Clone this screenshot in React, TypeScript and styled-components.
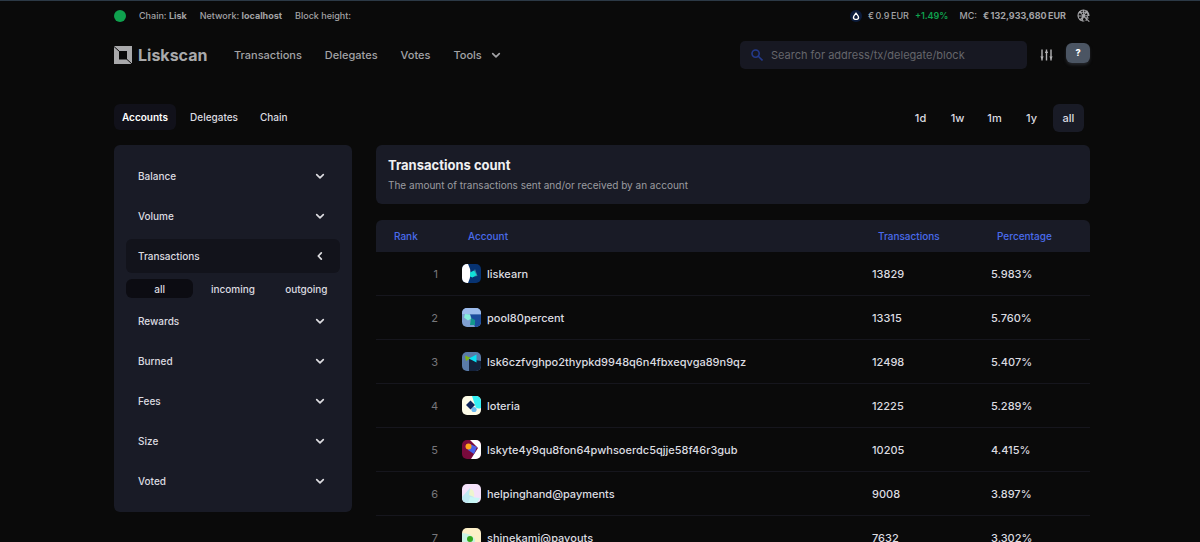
import React from "react";
import styled, { createGlobalStyle } from "styled-components";

const colors = {
  page: "#0a0a0a",
  panel: "#191b26",
  panelDark: "#12131b",
  pill: "#0c0c12",
  line: "#16161d",
  text: "#dcdce0",
  muted: "#a3a3a6",
  blue: "#4a6cec",
  green: "#0fa14e",
};

const GlobalStyle = createGlobalStyle`
  *, *::before, *::after { box-sizing: border-box; }
  html { scrollbar-width: none; }
  body {
    margin: 0;
    background: ${colors.page};
    color: ${colors.text};
    font-family: Inter, "Open Sans", sans-serif;
    font-size: 11px;
    line-height: 16px;
  }
  button, input { font: inherit; color: inherit; }
  button { border: 0; padding: 0; background: none; cursor: pointer; }
  a { color: inherit; text-decoration: none; }
`;

const Page = styled.div`
  border-top: 1px solid #2c3946;
  padding: 0 110px 0 114px;
`;

const StatusBar = styled.div`
  display: flex;
  align-items: center;
  justify-content: space-between;
  height: 29px;
  font-size: 9px;
  font-weight: 500;
  color: ${colors.muted};
`;

const StatusGroup = styled.div<{ $gap: number }>`
  display: flex;
  align-items: center;
  gap: ${(p) => p.$gap}px;
  white-space: nowrap;
  strong { font-weight: 700; }
`;

const StatusDot = styled.span`
  width: 12px;
  height: 12px;
  border-radius: 50%;
  background: ${colors.green};
`;

const Change = styled.span`
  color: ${colors.green};
  font-weight: 600;
`;

const Price = styled.div`
  display: flex;
  align-items: center;
  gap: 6px;
`;

const Header = styled.header`
  display: flex;
  align-items: center;
  height: 50px;
`;

const Brand = styled.a`
  display: flex;
  align-items: center;
  gap: 6px;
  width: 120px;
  font-size: 16px;
  font-weight: 700;
  color: #a9a9ab;
`;

const Nav = styled.nav`
  display: flex;
  align-items: center;
  gap: 23px;
  flex: 1;
  font-size: 11px;
  font-weight: 500;
  color: ${colors.muted};
`;

const NavButton = styled.button`
  display: flex;
  align-items: center;
  gap: 9px;
`;

const SearchBox = styled.label`
  display: flex;
  align-items: center;
  gap: 8px;
  width: 287px;
  height: 28px;
  padding: 0 11px;
  border-radius: 5px;
  background: #171822;
`;

const SearchInput = styled.input`
  flex: 1;
  min-width: 0;
  border: 0;
  padding: 0;
  background: none;
  outline: none;
  font-size: 11px;
  &::placeholder { color: #65666b; opacity: 1; }
`;

const IconButton = styled.button`
  display: flex;
  margin: 0 13px;
`;

const HelpButton = styled.button`
  width: 24px;
  height: 20px;
  margin-bottom: 4px;
  border-radius: 6px;
  background: #4b5563;
  color: #fff;
  font-size: 9px;
  font-weight: 800;
  box-shadow: 0 2px 3px #25272c;
`;

const Toolbar = styled.div`
  display: flex;
  justify-content: space-between;
  align-items: flex-start;
  margin-top: 24px;
  padding-right: 6px;
  height: 41px;
`;

const ButtonGroup = styled.div<{ $gap: number }>`
  display: flex;
  gap: ${(p) => p.$gap}px;
`;

const Tab = styled.button<{ $active?: boolean }>`
  height: 26px;
  padding: 0 8px;
  border-radius: 6px;
  font-size: 10px;
  font-weight: ${(p) => (p.$active ? 600 : 500)};
  color: ${(p) => (p.$active ? "#fff" : colors.text)};
  background: ${(p) => (p.$active ? "#11111a" : "transparent")};
`;

const Period = styled.button<{ $active?: boolean }>`
  min-width: 31px;
  height: 28px;
  border-radius: 6px;
  font-size: 11px;
  font-weight: 500;
  background: ${(p) => (p.$active ? colors.panel : "transparent")};
`;

const Columns = styled.main`
  display: grid;
  grid-template-columns: 238px minmax(0, 1fr);
  align-items: start;
  gap: 24px;
`;

const Filters = styled.aside`
  display: flex;
  flex-direction: column;
  gap: 6px;
  padding: 14px 12px;
  border-radius: 6px;
  background: ${colors.panel};
`;

const FilterButton = styled.button<{ $open?: boolean }>`
  display: flex;
  align-items: center;
  justify-content: space-between;
  height: 34px;
  padding: 0 15px 0 12px;
  border-radius: 6px;
  font-size: 10px;
  font-weight: 500;
  background: ${(p) => (p.$open ? colors.panelDark : "transparent")};
`;

const SubFilters = styled.div`
  display: grid;
  grid-template-columns: repeat(3, 1fr);
  gap: 6px;
`;

const SubFilter = styled.button<{ $active?: boolean }>`
  height: 19px;
  border-radius: 6px;
  font-size: 10px;
  font-weight: 500;
  background: ${(p) => (p.$active ? colors.pill : "transparent")};
`;

const Summary = styled.section`
  height: 59px;
  margin-bottom: 16px;
  padding: 12px;
  border-radius: 6px;
  background: ${colors.panel};
`;

const Title = styled.h1`
  margin: 0 0 3px;
  font-size: 13px;
  line-height: 17px;
  font-weight: 700;
  color: #f0f0f2;
`;

const Subtitle = styled.p`
  margin: 0;
  font-size: 10px;
  line-height: 16px;
  color: #9b9ba0;
`;

const Table = styled.table`
  width: 100%;
  table-layout: fixed;
  border-collapse: separate;
  border-spacing: 0;
`;

const Heading = styled.th<{ $width?: number; $indent?: number }>`
  width: ${(p) => (p.$width ? `${p.$width}px` : "auto")};
  height: 32px;
  padding: 0 0 1px ${(p) => p.$indent ?? 12}px;
  text-align: left;
  font-size: 10px;
  font-weight: 500;
  color: ${colors.blue};
  background: ${colors.panel};
  &:first-child { border-top-left-radius: 6px; }
  &:last-child { border-top-right-radius: 6px; }
`;

const Cell = styled.td`
  height: 44px;
  padding: 0 0 0 6px;
  border-bottom: 1px solid ${colors.line};
  font-size: 11px;
  font-weight: 500;
`;

const RankCell = styled(Cell)`
  padding: 0 18px 0 0;
  text-align: right;
  font-weight: 400;
  color: #77777b;
`;

const Account = styled.a`
  display: flex;
  align-items: center;
  gap: 6px;
`;

const AvatarFrame = styled.svg`
  width: 19px;
  height: 19px;
  border-radius: 5px;
  flex: none;
`;

const Chevron = ({ left = false }: { left?: boolean }) => (
  <svg width="10" height="10" viewBox="0 0 10 10" fill="none" stroke="currentColor" strokeWidth="1.7" strokeLinecap="round" strokeLinejoin="round" aria-hidden>
    <path d={left ? "M6.300 1.800 3.300 5l3 3.200" : "M1.700 3.700 5 6.800l3.300-3.100"} />
  </svg>
);

const Logo = () => (
  <svg width="18" height="18" viewBox="0 0 18 18" aria-hidden>
    <path fill="#a9a9ab" fillRule="evenodd" d="M0 0h18v18H0zM5 5v8.500h8V5z" />
    <path d="M0 .5 5.500 5.500M12.500 13 18 18" stroke={colors.page} strokeWidth="1" />
  </svg>
);

const Drop = () => (
  <svg width="12" height="12" viewBox="0 0 12 12" aria-hidden>
    <circle cx="6" cy="6" r="6" fill="#0c1c3c" />
    <path d="M6 3 8.300 6.400A2.300 2.300 0 0 1 7.300 9.300H4.700A2.300 2.300 0 0 1 3.700 6.400z" fill="none" stroke="#fff" strokeWidth="1.300" strokeLinejoin="round" />
  </svg>
);

const NetworkIcon = () => (
  <svg width="13" height="13" viewBox="0 0 13 13" fill="none" stroke="#a3a3a6" strokeWidth="1.100" strokeLinecap="round" aria-hidden>
    <path d="M7 12A5.500 5.500 0 1 1 12 6.500M2 3.200 9.500 3l2 3.500M3 3l3.500 4L10 2M1.200 7l5.300 0L5 12M6.500 7 12 12.300M6.500 7l5-.5M3.500 11 6 7M6.500 1l.2 5.500M8.500 9h2.800M10.500 7.500 9 11.500" />
    <g fill="#a3a3a6" stroke="none">
      <circle cx="3" cy="3.200" r="1.200" /><circle cx="9.500" cy="3" r="1.200" />
      <circle cx="6.500" cy="7" r="1.400" /><circle cx="3.500" cy="10.500" r="1.100" />
    </g>
  </svg>
);

const SearchIcon = () => (
  <svg width="12" height="12" viewBox="0 0 12 12" fill="none" stroke="#243a8c" strokeWidth="1.600" aria-hidden>
    <circle cx="4.600" cy="4.600" r="3.600" />
    <path d="M7.300 7.300 11.500 11.500" />
  </svg>
);

const TuneIcon = () => (
  <svg width="13" height="12" viewBox="0 0 13 12" fill="none" stroke="#b4b4b6" strokeWidth="1.400" aria-hidden>
    <path d="M2 .5v11M6.500 .5v11M11 .5v11" />
    <path d="M.3 7.500h3.400L2 10.500zM4.800 4h3.400L6.500 1zM9.300 7.500h3.400L11 10.500z" fill="#b4b4b6" stroke="none" />
  </svg>
);

const avatarArt: React.ReactNode[] = [
  <>
    <rect width="19" height="19" fill="#073372" />
    <path d="M0 0h6q5 9 0 19H0z" fill="#fff" />
    <path d="M13 5l2.500 7-6.500 1z" fill="#3c8a9c" />
    <path d="M8 8.500 12 6.500l2.500 4.500-4 2.500-2.500-1z" fill="#12e0d8" />
  </>,
  <>
    <rect width="19" height="19" fill="#7f9fd0" />
    <path d="M0 0h19v6H0z" fill="#9dbcec" />
    <path d="M8 6.500h11V19h-6z" fill="#1c4c9c" />
    <path d="M9 10l4 2v5H8z" fill="#12968c" />
    <path d="M3 6l5 .5 1 4-3 2-4-3z" fill="#86eedc" />
  </>,
  <>
    <rect width="19" height="19" fill="#5a7ba8" />
    <path d="M7 7l12 2v10H7z" fill="#14223c" />
    <path d="M3 3.500 9 6 4 9z" fill="#7fb414" />
    <path d="M7 6.500 14.500 2.500v8z" fill="#08e0f4" />
  </>,
  <>
    <rect width="19" height="19" fill="#fdfbe6" />
    <path d="M10 0h9v12q-5 2-6-3z" fill="#35f1f5" />
    <circle cx="12" cy="13.500" r="2.600" fill="#69b9f0" />
    <path d="M8.500 4.500 13 9l-4.500 4.500L4 9z" fill="#10265a" />
  </>,
  <>
    <rect width="19" height="19" fill="#780a3c" />
    <path d="M8 0h11v19H9l7-11z" fill="#fff" />
    <path d="M8 4l7 3-3 7-6-4z" fill="#4961e8" />
    <circle cx="6.500" cy="6.500" r="3" fill="#ffa51c" />
  </>,
  <>
    <rect width="19" height="19" fill="#f4e2fa" />
    <path d="M0 13 8 4l6 15H0z" fill="#bfe9f2" />
    <path d="M8 5q5 0 4 8l-5-2z" fill="#eef5cf" />
    <path d="M8 13l10 1-3 5H6z" fill="#c9f6f6" />
  </>,
  <>
    <rect width="19" height="19" fill="#fdf0c8" />
    <path d="M0 5q8 0 13 6v8H0z" fill="#c8f3e4" />
    <circle cx="8" cy="11" r="3" fill="#35a81c" />
  </>,
];

const navLinks = ["Transactions", "Delegates", "Votes"];
const periods = ["1d", "1w", "1m", "1y", "all"];
const filters = ["Balance", "Volume", "Transactions", "Rewards", "Burned", "Fees", "Size", "Voted"];

const rows = [
  { name: "liskearn", count: "13829", share: "5.983%" },
  { name: "pool80percent", count: "13315", share: "5.760%" },
  { name: "lsk6czfvghpo2thypkd9948q6n4fbxeqvga89n9qz", count: "12498", share: "5.407%" },
  { name: "loteria", count: "12225", share: "5.289%" },
  { name: "lskyte4y9qu8fon64pwhsoerdc5qjje58f46r3gub", count: "10205", share: "4.415%" },
  { name: "helpinghand@payments", count: "9008", share: "3.897%" },
  { name: "shinekami@payouts", count: "7632", share: "3.302%" },
];

export default function App() {
  return (
    <>
      <GlobalStyle />
      <Page>
        <StatusBar>
          <StatusGroup $gap={13}>
            <StatusDot />
            <span>Chain: <strong>Lisk</strong></span>
            <span>Network: <strong>localhost</strong></span>
            <span>Block height:</span>
          </StatusGroup>
          <StatusGroup $gap={11}>
            <Price>
              <Drop />
              <span>€{"\u2009"}0.9{"\u2009"}EUR</span>
              <Change>+1.49%</Change>
            </Price>
            <Price>
              <span>MC:</span>
              <strong>€{"\u2009"}132,933,680{"\u2009"}EUR</strong>
            </Price>
            <NetworkIcon />
          </StatusGroup>
        </StatusBar>

        <Header>
          <Brand href="#home"><Logo />Liskscan</Brand>
          <Nav>
            {navLinks.map((label) => <a key={label} href={`#${label.toLowerCase()}`}>{label}</a>)}
            <NavButton type="button">Tools <Chevron /></NavButton>
          </Nav>
          <SearchBox>
            <SearchIcon />
            <SearchInput type="text" aria-label="Search" placeholder="Search for address/tx/delegate/block" />
          </SearchBox>
          <IconButton type="button" aria-label="Settings"><TuneIcon /></IconButton>
          <HelpButton type="button">?</HelpButton>
        </Header>

        <Toolbar>
          <ButtonGroup $gap={6}>
            <Tab type="button" $active>Accounts</Tab>
            <Tab type="button">Delegates</Tab>
            <Tab type="button">Chain</Tab>
          </ButtonGroup>
          <ButtonGroup $gap={6}>
            {periods.map((p) => <Period key={p} type="button" $active={p === "all"}>{p}</Period>)}
          </ButtonGroup>
        </Toolbar>

        <Columns>
          <Filters>
            {filters.map((label) => {
              const open = label === "Transactions";
              return (
                <React.Fragment key={label}>
                  <FilterButton type="button" $open={open} aria-expanded={open}>
                    {label}<Chevron left={open} />
                  </FilterButton>
                  {open && (
                    <SubFilters>
                      <SubFilter type="button" $active>all</SubFilter>
                      <SubFilter type="button">incoming</SubFilter>
                      <SubFilter type="button">outgoing</SubFilter>
                    </SubFilters>
                  )}
                </React.Fragment>
              );
            })}
          </Filters>

          <div>
            <Summary>
              <Title>Transactions count</Title>
              <Subtitle>The amount of transactions sent and/or received by an account</Subtitle>
            </Summary>
            <Table>
              <thead>
                <tr>
                  <Heading $width={80} $indent={18}>Rank</Heading>
                  <Heading>Account</Heading>
                  <Heading $width={119}>Transactions</Heading>
                  <Heading $width={105}>Percentage</Heading>
                </tr>
              </thead>
              <tbody>
                {rows.map((row, i) => (
                  <tr key={row.name}>
                    <RankCell>{i + 1}</RankCell>
                    <Cell>
                      <Account href={`#${row.name}`}>
                        <AvatarFrame viewBox="0 0 19 19" aria-hidden>{avatarArt[i]}</AvatarFrame>
                        {row.name}
                      </Account>
                    </Cell>
                    <Cell>{row.count}</Cell>
                    <Cell>{row.share}</Cell>
                  </tr>
                ))}
              </tbody>
            </Table>
          </div>
        </Columns>
      </Page>
    </>
  );
}
